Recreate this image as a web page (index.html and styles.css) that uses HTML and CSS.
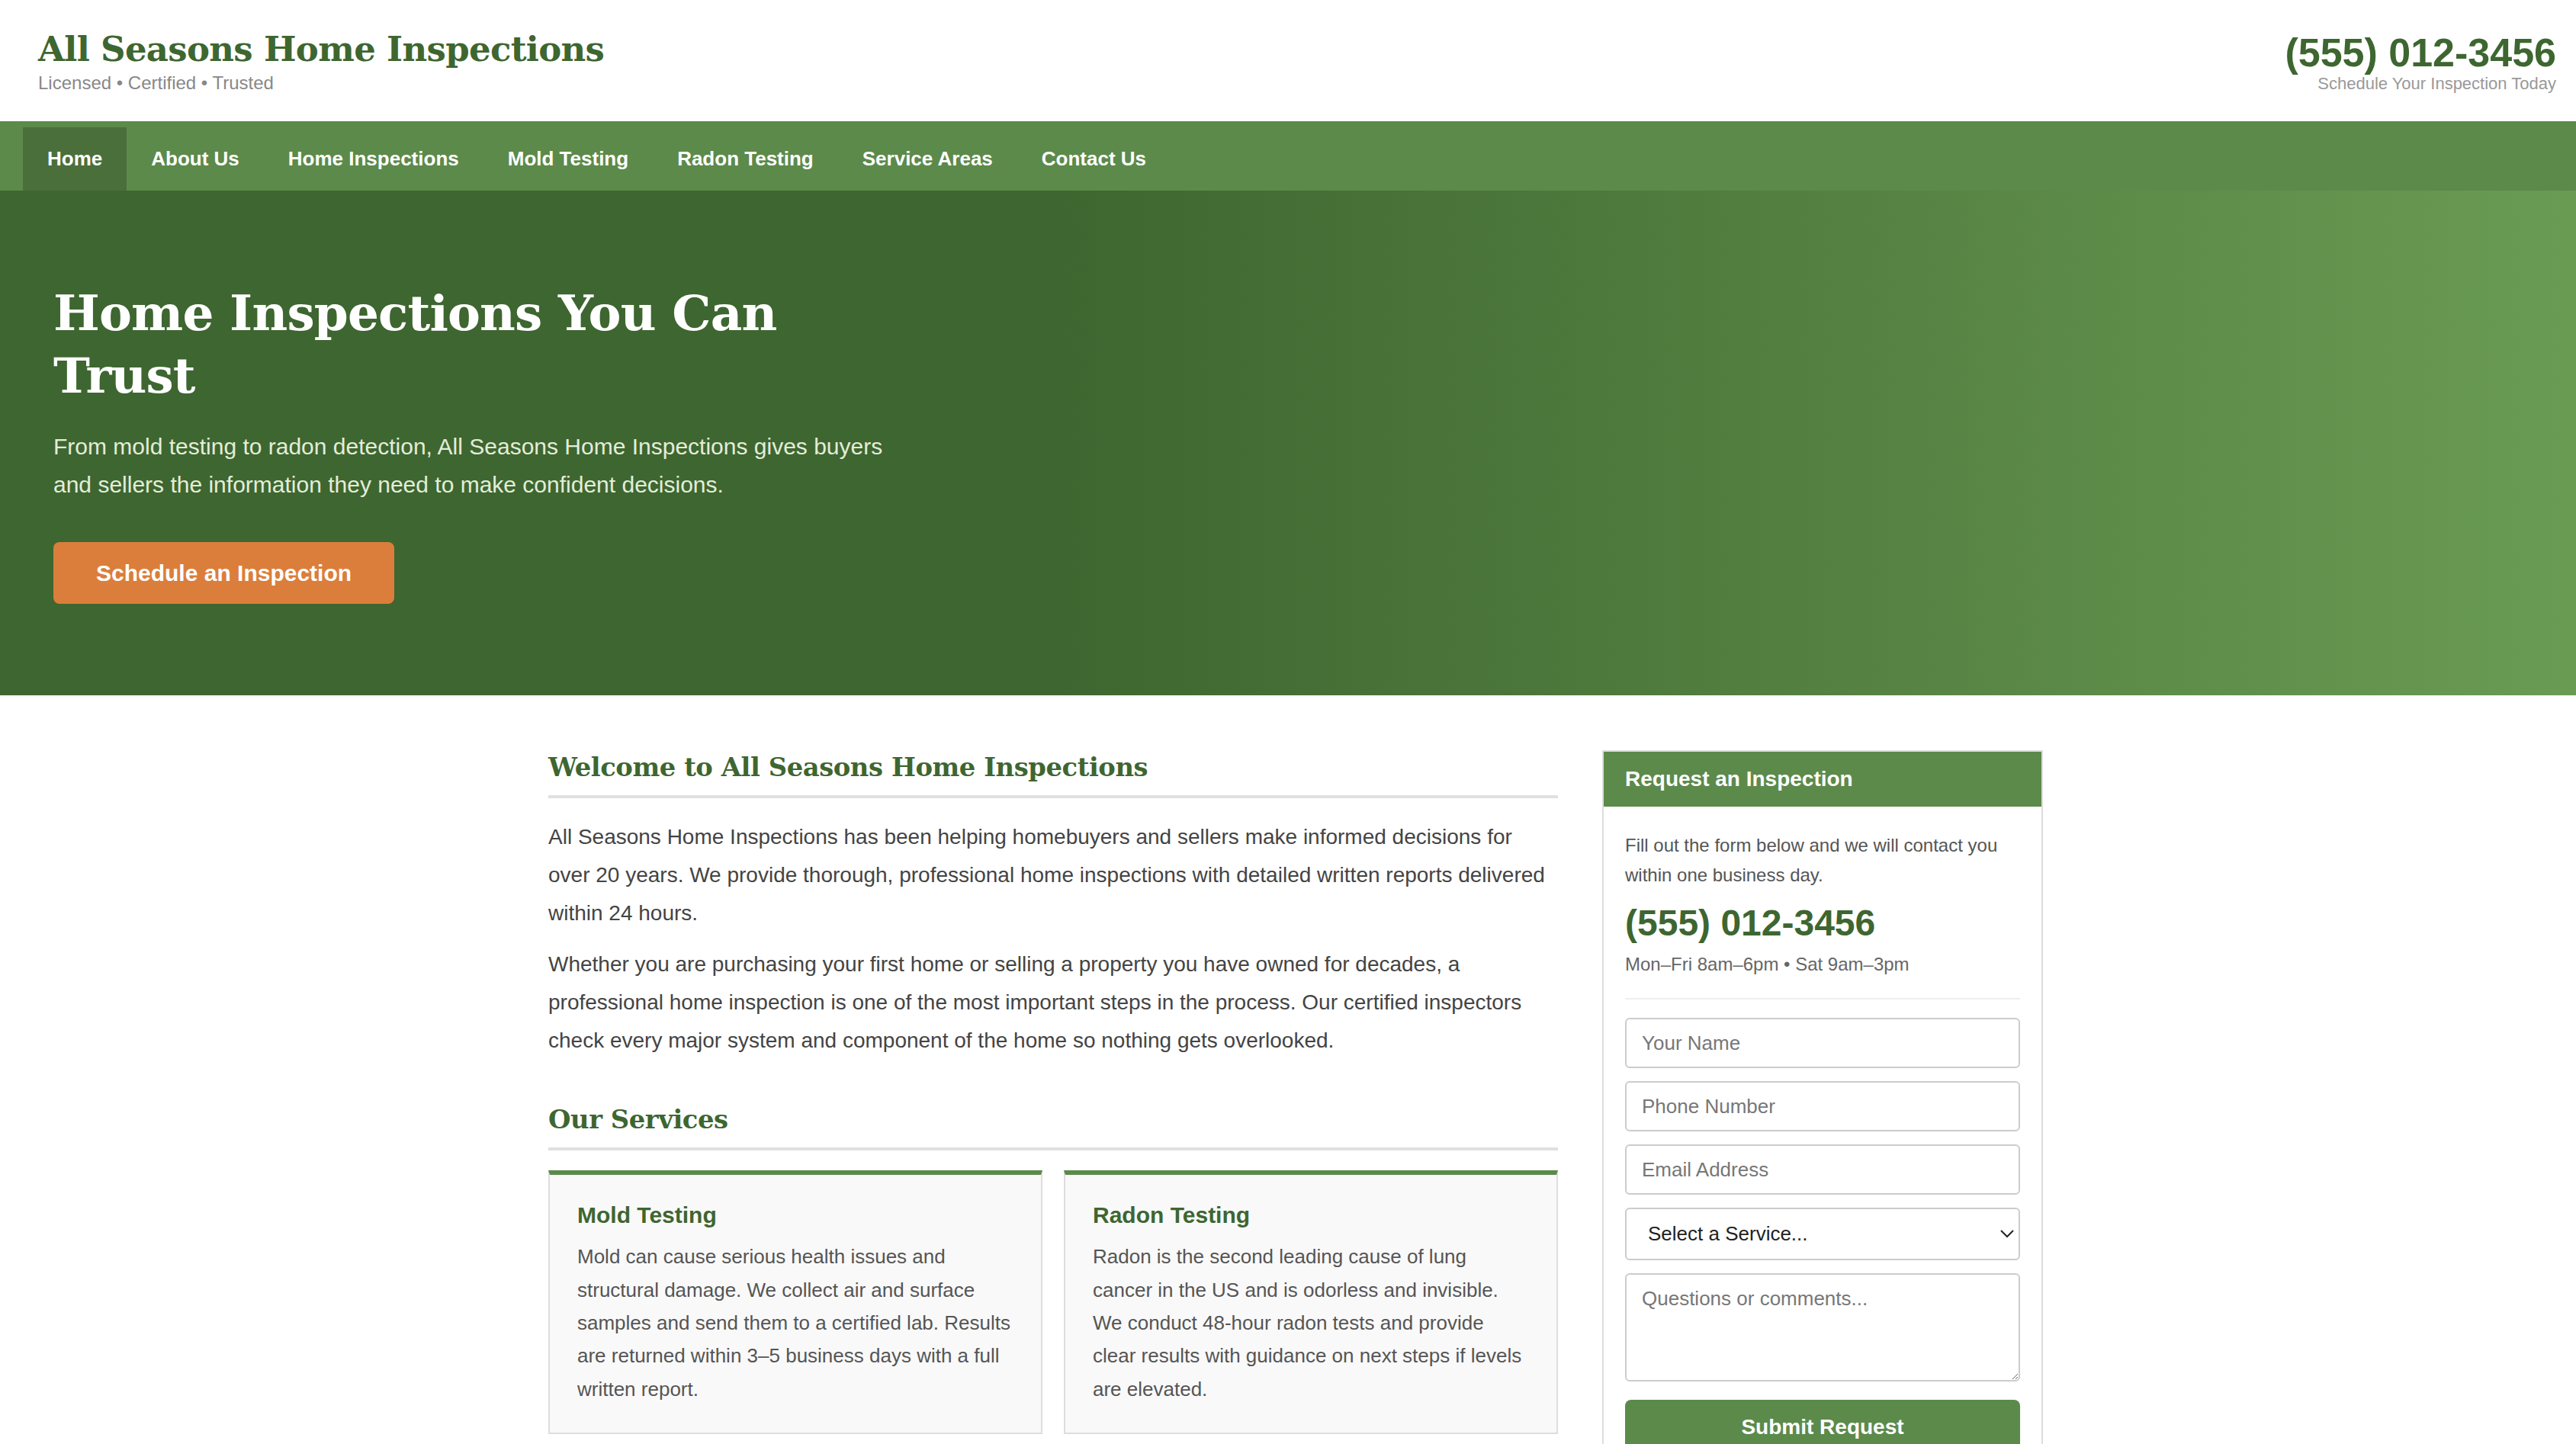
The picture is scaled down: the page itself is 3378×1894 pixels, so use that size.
FILE: index.html
```html
<!DOCTYPE html>
<html lang="en">
<head>
<meta charset="utf-8">
<title>All Seasons Home Inspections</title>
<link rel="stylesheet" href="styles.css">
</head>
<body>
<header class="site-header">
  <div class="brand">
    <div class="brand-name">All Seasons Home Inspections</div>
    <div class="brand-tag">Licensed • Certified • Trusted</div>
  </div>
  <div class="header-contact">
    <div class="header-phone">(555) 012-3456</div>
    <div class="header-note">Schedule Your Inspection Today</div>
  </div>
</header>

<nav class="main-nav">
  <a class="nav-link active" href="#">Home</a>
  <a class="nav-link" href="#">About Us</a>
  <a class="nav-link" href="#">Home Inspections</a>
  <a class="nav-link" href="#">Mold Testing</a>
  <a class="nav-link" href="#">Radon Testing</a>
  <a class="nav-link" href="#">Service Areas</a>
  <a class="nav-link" href="#">Contact Us</a>
</nav>

<section class="hero">
  <div class="hero-inner">
    <h1 class="hero-title">Home Inspections You Can Trust</h1>
    <p class="hero-text">From mold testing to radon detection, All Seasons Home Inspections gives buyers and sellers the information they need to make confident decisions.</p>
    <a class="btn-cta" href="#">Schedule an Inspection</a>
  </div>
</section>

<div class="page">
  <main class="content">
    <h2 class="section-title">Welcome to All Seasons Home Inspections</h2>
    <p class="body-text">All Seasons Home Inspections has been helping homebuyers and sellers make informed decisions for over 20 years. We provide thorough, professional home inspections with detailed written reports delivered within 24 hours.</p>
    <p class="body-text">Whether you are purchasing your first home or selling a property you have owned for decades, a professional home inspection is one of the most important steps in the process. Our certified inspectors check every major system and component of the home so nothing gets overlooked.</p>

    <h2 class="section-title services-title">Our Services</h2>
    <div class="cards">
      <div class="card">
        <h3 class="card-title">Mold Testing</h3>
        <p class="card-text">Mold can cause serious health issues and structural damage. We collect air and surface samples and send them to a certified lab. Results are returned within 3–5 business days with a full written report.</p>
      </div>
      <div class="card">
        <h3 class="card-title">Radon Testing</h3>
        <p class="card-text">Radon is the second leading cause of lung cancer in the US and is odorless and invisible. We conduct 48-hour radon tests and provide clear results with guidance on next steps if levels are elevated.</p>
      </div>
    </div>
  </main>

  <aside class="sidebar">
    <div class="side-box">
      <div class="side-head">Request an Inspection</div>
      <div class="side-body">
        <p class="side-intro">Fill out the form below and we will contact you within one business day.</p>
        <div class="side-phone">(555) 012-3456</div>
        <div class="side-hours">Mon–Fri 8am–6pm • Sat 9am–3pm</div>
        <form class="side-form">
          <input class="field" type="text" placeholder="Your Name">
          <input class="field" type="text" placeholder="Phone Number">
          <input class="field" type="text" placeholder="Email Address">
          <select class="field field-select">
            <option>Select a Service...</option>
            <option>Home Inspection</option>
            <option>Mold Testing</option>
            <option>Radon Testing</option>
          </select>
          <textarea class="field field-area" placeholder="Questions or comments..."></textarea>
          <button class="btn-submit" type="button">Submit Request</button>
        </form>
      </div>
    </div>
  </aside>
</div>
</body>
</html>
```

FILE: styles.css
```css
* {
  box-sizing: border-box;
}

html {
  zoom: 2;
}

body {
  margin: 0;
  background: #ffffff;
  color: #444444;
  font-family: "Liberation Sans", Arial, sans-serif;
}

/* Header */
.site-header {
  height: 79.5px;
  padding: 0 13px 0 25px;
  display: flex;
  justify-content: space-between;
  align-items: center;
  background: #ffffff;
}

.brand {
  padding-top: 1px;
}

.brand-name {
  font-family: "DejaVu Serif", Georgia, serif;
  font-weight: bold;
  font-size: 22.5px;
  letter-spacing: -0.015em;
  line-height: 28px;
  color: #3e6630;
}

.brand-tag {
  font-size: 12px;
  line-height: 16px;
  color: #888888;
}

.header-contact {
  text-align: right;
  padding-top: 2px;
}

.header-phone {
  font-size: 26px;
  font-weight: bold;
  line-height: 28px;
  color: #3e6630;
}

.header-note {
  font-size: 11px;
  line-height: 13px;
  color: #999999;
}

/* Navigation */
.main-nav {
  display: flex;
  height: 45.5px;
  padding: 4px 15px 0;
  background: #5c8a4a;
}

.nav-link {
  display: block;
  padding: 0 16px;
  line-height: 41.5px;
  font-size: 13px;
  font-weight: bold;
  color: #ffffff;
  text-decoration: none;
}

.nav-link.active {
  background: #4a6f3b;
}

/* Hero */
.hero {
  padding: 60px 35px;
  background: linear-gradient(to right, #3e6630 0%, #3e6630 41%, #6a9b53 100%);
}

.hero-inner {
  max-width: 555px;
  display: flex;
  flex-direction: column;
  align-items: flex-start;
}

.hero-title {
  margin: 0 0 14px;
  font-family: "DejaVu Serif", Georgia, serif;
  font-weight: bold;
  font-size: 32.2px;
  letter-spacing: -0.013em;
  line-height: 40.8px;
  color: #ffffff;
}

.hero-text {
  margin: 0 0 25px;
  font-size: 15px;
  line-height: 25px;
  color: #e3edda;
}

.btn-cta {
  display: inline-block;
  padding: 12px 28px;
  border-radius: 4px;
  background: #db7e3b;
  color: #ffffff;
  font-size: 15px;
  font-weight: bold;
  line-height: 16.6px;
  text-decoration: none;
}

/* Main layout */
.page {
  width: 990px;
  margin: 0 auto;
  padding: 36px 0 0 10px;
  display: grid;
  grid-template-columns: 662px 289px;
  column-gap: 29px;
  align-items: start;
}

.content {
  padding-top: 1px;
}

.section-title {
  margin: 0 0 13px;
  padding-bottom: 8px;
  border-bottom: 2px solid #e0e0e0;
  font-family: "DejaVu Serif", Georgia, serif;
  font-weight: bold;
  font-size: 16.9px;
  letter-spacing: -0.013em;
  line-height: 20.5px;
  color: #3e6630;
}

.services-title {
  margin-top: 29px;
}

.body-text {
  margin: 0 0 8.5px;
  font-size: 14px;
  line-height: 25px;
  color: #444444;
}

.cards {
  display: grid;
  grid-template-columns: 1fr 1fr;
  column-gap: 14px;
}

.card {
  padding: 16.5px 18px 17.5px;
  background: #f9f9f9;
  border: 1px solid #dddddd;
  border-top: 3px solid #5c8a4a;
}

.card-title {
  margin: 0 0 7px;
  font-size: 15px;
  font-weight: bold;
  line-height: 19.5px;
  color: #3e6630;
}

.card-text {
  margin: 0;
  font-size: 13px;
  line-height: 21.67px;
  color: #555555;
}

/* Sidebar */
.side-box {
  border: 1px solid #dddddd;
  background: #ffffff;
}

.side-head {
  padding: 10px 14px;
  background: #5c8a4a;
  color: #ffffff;
  font-size: 14px;
  font-weight: bold;
  line-height: 15.7px;
}

.side-body {
  padding: 15.7px 14px 14px;
}

.side-intro {
  margin: 0 0 7.6px;
  font-size: 12px;
  line-height: 19.5px;
  color: #555555;
}

.side-phone {
  margin-bottom: 3.5px;
  font-size: 24px;
  font-weight: bold;
  line-height: 28.8px;
  color: #3e6630;
}

.side-hours {
  margin-bottom: 12.1px;
  padding-bottom: 12.9px;
  border-bottom: 1px solid #eeeeee;
  font-size: 12px;
  line-height: 18px;
  color: #666666;
}

.field {
  display: block;
  width: 100%;
  margin: 0 0 8.5px;
  padding: 8px 10px;
  border: 1px solid #cccccc;
  border-radius: 3px;
  background: #ffffff;
  font-family: "Liberation Sans", Arial, sans-serif;
  font-size: 13px;
  line-height: 15px;
  color: #222222;
}

.field::placeholder {
  color: #777777;
}

.field-select {
  height: 34.5px;
  padding-top: 0;
  padding-bottom: 0;
}

.field-area {
  height: 71px;
  margin-bottom: 12px;
  resize: vertical;
}

.btn-submit {
  display: block;
  width: 100%;
  padding: 10px;
  border: none;
  border-radius: 4px;
  background: #5c8a4a;
  color: #ffffff;
  font-family: "Liberation Sans", Arial, sans-serif;
  font-size: 14px;
  font-weight: bold;
  line-height: 16px;
}
```
